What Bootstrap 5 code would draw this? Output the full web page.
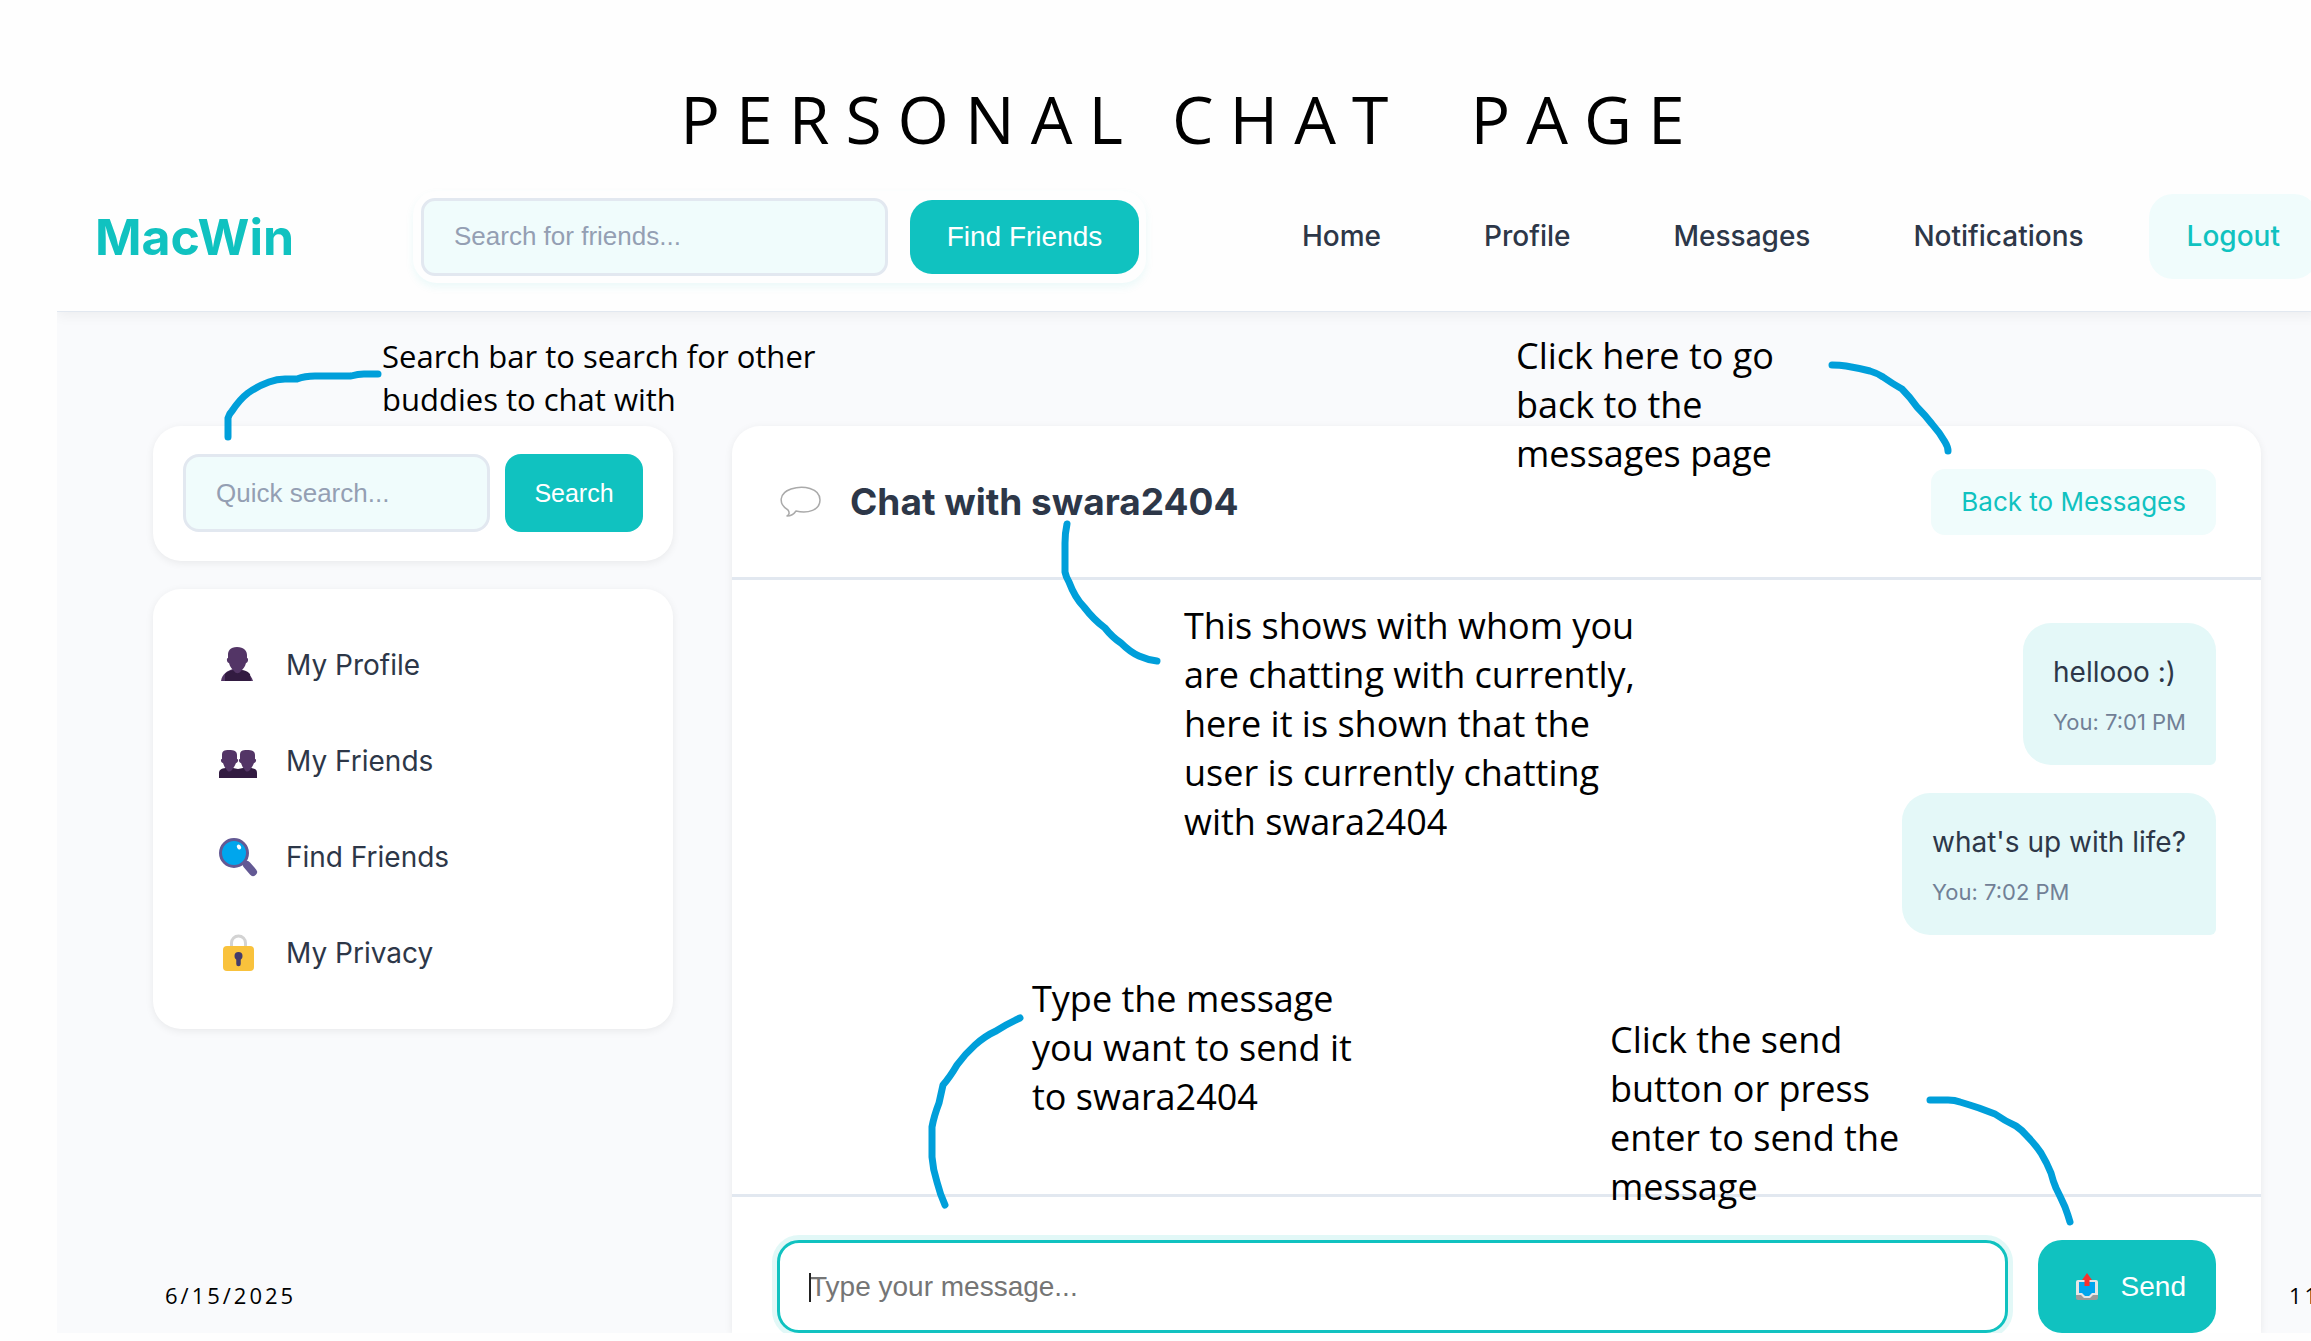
<!DOCTYPE html>
<html lang="en">
<head>
<meta charset="utf-8">
<meta name="viewport" content="width=device-width, initial-scale=1">
<title>Personal Chat Page</title>
<link href="https://cdn.jsdelivr.net/npm/bootstrap@5.3.0/dist/css/bootstrap.min.css" rel="stylesheet">
<style>
:root { --teal:#10c2c0; --mint:#f0fcfc; --line:#e2e8f0; --ink:#2d3748; --note:#009fda; }
body { background:#fefefe; font-family:Inter,sans-serif; color:var(--ink); }
.slide-title { height:162px; padding:73px 0 0 70px; font:400 66px/90px "Open Sans",sans-serif; letter-spacing:16px; color:#000; white-space:pre; }
.app { margin-left:57px; background:#f9fafc; }
.topbar { height:150px; background:#fefefe; padding-left:38px; border-bottom:1px solid var(--line); box-shadow:0 4px 12px rgba(0,0,0,.05); margin-right:-7px; }
.brand-name { font-size:50px; line-height:60px; font-weight:700; color:var(--teal); width:318px; }
.find-box { width:733px; padding:7px 7px 7px 8px; border-radius:24px; gap:22px; box-shadow:0 4px 8px rgba(16,194,192,.08); }
.field { border:3px solid var(--line); background:var(--mint); border-radius:14px; height:78px; font:400 26px "Liberation Sans",sans-serif; padding:0 30px; min-width:0; }
.field::placeholder { color:#949fb3; opacity:1; }
.field-sm { border-radius:16px; }
.btn-teal { --bs-btn-color:#fff; --bs-btn-bg:var(--teal); --bs-btn-hover-bg:#0daead; --bs-btn-hover-color:#fff; border:0; border-radius:22px; font:400 28px "Liberation Sans",sans-serif; }
.btn-find { width:229px; height:74px; flex:none; }
.btn-quick { width:138px; height:78px; font-size:25px; border-radius:16px; flex:none; }
.main-nav { gap:27px; font-size:28px; font-weight:500; }
.main-nav a { color:var(--ink); text-decoration:none; padding:0 38px; line-height:85px; }
.main-nav a.leave { color:var(--teal); background:var(--mint); border-radius:24px; }
.workspace { padding:114px 50px 0 96px; gap:59px; min-height:0; }
.side { width:520px; flex:none; gap:28px; }
.panel { background:#fff; border-radius:28px; box-shadow:0 2px 8px rgba(0,0,0,.07); }
.quick { padding:28px 30px 29px; gap:15px; }
.menu-card { padding:28px 30px; }
.menu-card a { color:var(--ink); text-decoration:none; font-size:28px; height:96px; padding-left:35px; gap:28px; }
.menu-card svg { width:40px; height:40px; flex:none; }
.chat { border-radius:28px 28px 0 0; min-width:0; }
.chat-head { height:154px; padding:0 45px; border-bottom:3px solid var(--line); }
.chat-head h2 { font-size:37px; font-weight:700; line-height:44px; gap:25px; }
.btn-back { color:var(--teal); background:var(--mint); border:0; border-radius:14px; padding:0 30px; font-size:26px; line-height:66px; }
.log { padding:43px 45px; gap:28px; min-height:0; }
.bubble { background:#e4f8f8; border-radius:28px 28px 6px 28px; padding:27px 30px 25px; font-size:28px; line-height:45px; }
.bubble time { display:block; margin-top:9px; font-size:22px; line-height:36px; color:#718096; }
.compose { padding:43px 45px 0; gap:30px; border-top:3px solid var(--line); }
.compose-box { position:relative; min-width:0; }
.compose-box::before { content:""; position:absolute; left:32px; top:33px; width:2px; height:29px; background:#222; }
.compose .field { height:93px; border-color:var(--teal); background:#fff; border-radius:22px; font-size:28px; padding:0 30px; box-shadow:0 0 0 5px rgba(16,194,192,.12); }
.compose .field::placeholder { color:#757575; }
.btn-send { height:93px; padding:0 30px; width:178px; border-radius:24px; gap:22px; flex:none; justify-content:flex-end; }
.callout-note { position:absolute; margin:0; font:400 36px/49px "Open Sans",sans-serif; color:#000; white-space:nowrap; }
.callout-sm { font-size:31px; line-height:43px; }
.slide-meta { position:absolute; top:1278px; font:400 22px/34px "Open Sans",sans-serif; letter-spacing:3px; color:#000; }
.ink { position:absolute; left:0; top:0; pointer-events:none; }
#n-search { left:382px; top:335px; } #n-back { left:1516px; top:331px; } #n-who { left:1184px; top:601px; }
#n-type { left:1032px; top:974px; } #n-send { left:1610px; top:1015px; }
#m-date { left:165px; } #m-page { left:2289px; }
</style>
<script src="https://cdn.jsdelivr.net/npm/bootstrap@5.3.0/dist/js/bootstrap.bundle.min.js"></script>
</head>
<body class="vh-100 d-flex flex-column overflow-hidden position-relative pb-2">
<h1 class="slide-title text-center m-0 flex-shrink-0">PERSONAL CHAT  PAGE</h1>
<div class="app flex-grow-1 d-flex flex-column overflow-hidden">
  <header class="topbar d-flex align-items-center flex-shrink-0">
    <div class="brand-name">MacWin</div>
    <form class="find-box d-flex align-items-center">
      <input class="field flex-grow-1" type="text" placeholder="Search for friends..." aria-label="Search for friends">
      <button class="btn btn-teal btn-find" type="button">Find Friends</button>
    </form>
    <nav class="main-nav d-flex ms-auto">
      <a href="#">Home</a><a href="#">Profile</a><a href="#">Messages</a><a href="#">Notifications</a><a href="#" class="leave">Logout</a>
    </nav>
  </header>
  <main class="workspace d-flex flex-grow-1">
    <aside class="side d-flex flex-column">
      <form class="panel quick d-flex">
        <input class="field field-sm flex-grow-1" type="text" placeholder="Quick search..." aria-label="Quick search">
        <button class="btn btn-teal btn-quick" type="button">Search</button>
      </form>
      <nav class="panel menu-card d-flex flex-column">
        <a href="#" class="d-flex align-items-center"><svg viewBox="0 0 40 40" aria-hidden="true"><path fill="#533566" d="M3 36c1-7 6-10 12-12h5c7 2 13 5 15 12z"/><path fill="#321b41" d="M7 36v-7c3-3 6-4 9-4 2 2 5 2 7 0 4 0 6 1 9 4l1 7z"/><path fill="#533566" d="M10 10c0-4 2-8 9-8s10 4 10 8v3c2 0 1 5-1 5-1 4-3 6-5 8-2 3-5 3-7 0-2-2-4-4-5-8-2 0-3-5-1-5z"/></svg>My Profile</a>
        <a href="#" class="d-flex align-items-center"><svg viewBox="0 0 40 40" aria-hidden="true"><path fill="#321b41" d="M1 37v-5c0-4 4-5 8-5h6l5 1 5-1h6c5 0 8 1 8 5v5z"/><path id="head" fill="#533566" d="M4 14c0-4 2-5 7-5s8 1 8 5v4c2 0 1 4-1 4-1 3-3 5-4 7-2 2-4 2-5 0-2-2-3-4-4-7-2 0-3-4-1-4z"/><use href="#head" x="18"/></svg>My Friends</a>
        <a href="#" class="d-flex align-items-center"><svg viewBox="0 0 40 40" aria-hidden="true"><path d="M29 28l6 7" stroke="#635994" stroke-width="8" stroke-linecap="round"/><circle cx="16" cy="16" r="13.5" fill="#00a6ed" stroke="#635994" stroke-width="3"/><ellipse cx="21" cy="10" rx="2" ry="2.6" transform="rotate(-30 21 10)" fill="#fff"/></svg>Find Friends</a>
        <a href="#" class="d-flex align-items-center"><svg viewBox="0 0 40 40" aria-hidden="true"><path d="M13.500 16v-6a7 7 0 0 1 14 0v6" fill="none" stroke="#d3d3d3" stroke-width="3"/><rect x="5" y="13" width="31" height="25" rx="4" fill="#f9c23c"/><circle cx="20.500" cy="23" r="4" fill="#433b6b"/><path d="M20.500 23v8" stroke="#433b6b" stroke-width="4.500" stroke-linecap="round"/></svg>My Privacy</a>
      </nav>
    </aside>
    <section class="panel chat d-flex flex-column flex-grow-1">
      <div class="chat-head d-flex align-items-center justify-content-between flex-shrink-0">
        <h2 class="d-flex align-items-center m-0"><svg width="48" height="36" viewBox="0 0 48 36" aria-hidden="true"><path d="M11 26C1 20 2 9 14 5c12-4 29-1 29 11 0 10-12 14-24 11-2 3-6 5-9 5 2-1 3-3 1-6z" fill="#fff" stroke="#aaa" stroke-width="1.500" stroke-linejoin="round"/></svg>Chat with swara2404</h2>
        <a href="#" class="btn btn-back">Back to Messages</a>
      </div>
      <div class="log d-flex flex-column align-items-end flex-grow-1">
        <div class="bubble">hellooo :)<time>You: 7:01 PM</time></div>
        <div class="bubble">what's up with life?<time>You: 7:02 PM</time></div>
      </div>
      <form class="compose d-flex flex-shrink-0">
        <div class="compose-box flex-grow-1"><input class="field w-100" type="text" placeholder="Type your message..." aria-label="Type your message"></div>
        <button class="btn btn-teal btn-send d-flex align-items-center" type="button"><svg width="24" height="28" viewBox="0 0 24 28" aria-hidden="true"><path fill="#9b9b9b" d="M1 20h22v5q0 2-2 2H3q-2 0-2-2z"/><path fill="#e6e6e6" d="M1 9q0-2 2-2h18q2 0 2 2v13h-5l-3 3H9l-3-3H1z"/><path fill="#00a6ed" d="M4 9h16v11h-3l-3 3h-4l-3-3H4z"/><path fill="#f8312f" d="M12 0l5 7h-2.500v6h-5V7H7z"/></svg>Send</button>
      </form>
    </section>
  </main>
</div>
<p class="callout-note callout-sm" id="n-search">Search bar to search for other<br>buddies to chat with</p>
<p class="callout-note" id="n-back">Click here to go<br>back to the<br>messages page</p>
<p class="callout-note" id="n-who">This shows with whom you<br>are chatting with currently,<br>here it is shown that the<br>user is currently chatting<br>with swara2404</p>
<p class="callout-note" id="n-type">Type the message<br>you want to send it<br>to swara2404</p>
<p class="callout-note" id="n-send">Click the send<br>button or press<br>enter to send the<br>message</p>
<span class="slide-meta" id="m-date">6/15/2025</span>
<span class="slide-meta" id="m-page">11</span>
<svg class="ink" width="2311" height="1341" viewBox="0 0 2311 1341" fill="none" stroke="#009fda" stroke-width="7" stroke-linecap="round" stroke-linejoin="round" aria-hidden="true">
<path d="M228 437V418Q229 414 232 411Q240 399 248 393Q258 386 269 382Q277 379 285 379H297Q305 376 315 376H351Q358 374 364 374H378"/>
<path d="M1067 524Q1065 533 1065 543V572Q1066 577 1069 582Q1075 598 1084 607Q1094 620 1105 628Q1112 637 1121 643Q1130 652 1139 656Q1148 660 1157 661"/>
<path d="M1832 365Q1840 365 1846 366Q1858 368 1870 371Q1877 373 1883 377Q1893 384 1902 389Q1910 397 1917 407Q1925 415 1932 424Q1940 433 1945 442Q1948 447 1948 451"/>
<path d="M1020 1018Q1007 1024 996 1031Q985 1036 975 1045Q965 1054 957 1065Q950 1077 943 1085Q941 1094 939 1103Q934 1116 932 1127V1157Q933 1170 937 1182Q940 1194 945 1205"/>
<path d="M1930 1100H1948Q1955 1100 1960 1102Q1970 1105 1979 1108Q1987 1111 1995 1114Q2005 1121 2016 1126Q2022 1130 2027 1136Q2035 1144 2041 1153Q2047 1163 2051 1173Q2053 1181 2056 1188Q2061 1198 2065 1207Q2068 1215 2070 1222"/>
</svg>
</body>
</html>
